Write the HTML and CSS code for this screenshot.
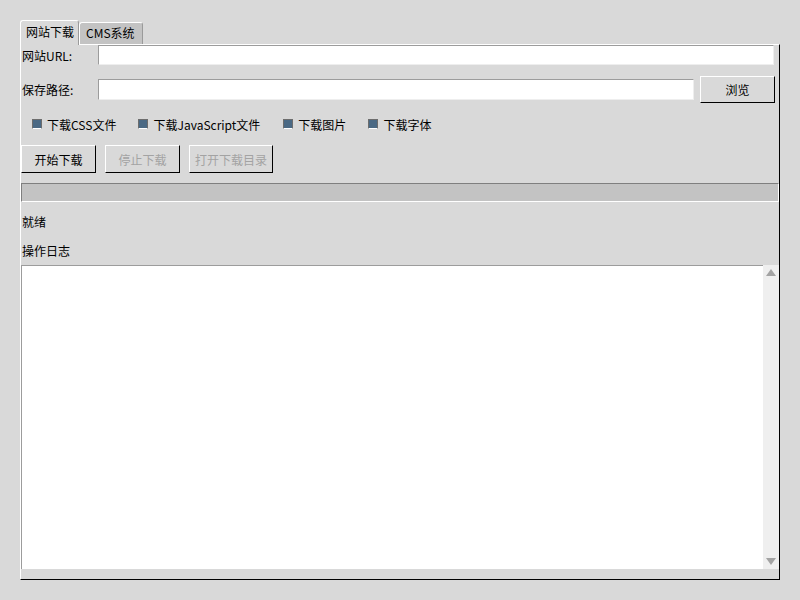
FILE: index.html
```html
<!DOCTYPE html>
<html lang="zh">
<head>
  <meta charset="UTF-8" />
  <title>网站下载器</title>
  <link rel="stylesheet" href="styles.css">
</head>
<body>
  <div class="notebook">
    <div class="tabs">
      <div class="tab selected">网站下载</div>
      <div class="tab">CMS系统</div>
    </div>
    <div class="panel">
      <div class="row row-url">
        <label class="lbl">网站URL:</label>
        <div class="entry"></div>
      </div>
      <div class="row row-path">
        <label class="lbl">保存路径:</label>
        <div class="entry"></div>
        <button class="btn browse">浏览</button>
      </div>
      <div class="checks">
        <span class="check"><i class="box"></i>下载CSS文件</span>
        <span class="check"><i class="box"></i>下载JavaScript文件</span>
        <span class="check"><i class="box"></i>下载图片</span>
        <span class="check"><i class="box"></i>下载字体</span>
      </div>
      <div class="actions">
        <button class="btn">开始下载</button>
        <button class="btn" disabled>停止下载</button>
        <button class="btn wide" disabled>打开下载目录</button>
      </div>
      <div class="progress"></div>
      <div class="status">就绪</div>
      <div class="status log-title">操作日志</div>
      <div class="log">
        <div class="log-text"></div>
        <div class="scrollbar">
          <span class="arrow up"></span>
          <span class="arrow down"></span>
        </div>
      </div>
    </div>
  </div>
</body>
</html>
```

FILE: styles.css
```css
*{
    margin: 0;
    padding: 0;
    box-sizing: border-box;
}
body{
    background-color: #d9d9d9;
    font-family: "Noto Sans CJK SC", "DejaVu Sans", sans-serif;
    font-size: 12px;
    color: #000;
}
.notebook{
    margin: 20px 0 0 20px;
    width: 760px;
}
.tabs{
    display: flex;
    align-items: flex-end;
    height: 24px;
}
.tab{
    height: 22px;
    padding: 0 7px 0 6px;
    line-height: 20px;
    white-space: nowrap;
    background-color: #c3c3c3;
    border: 1px solid #9a9a9a;
    border-top-color: #fff;
    border-left-color: #fff;
    border-bottom: none;
    border-radius: 3px 3px 0 0;
}
.tab.selected{
    height: 25px;
    background-color: #d9d9d9;
    position: relative;
    top: 1px;
    z-index: 1;
    line-height: 22px;
    padding: 0 4px 0 5px;
}
.panel{
    height: 536px;
    border: 1px solid #000;
    border-top-color: #fff;
    border-left-color: #fff;
    display: flex;
    flex-direction: column;
}
.row{
    display: flex;
    align-items: center;
}
.lbl{
    width: 77px;
    padding-left: 1px;
}
.row-url{
    height: 20px;
}
.row-url .entry{
    width: 676px;
    height: 20px;
}
.row-path{
    margin-top: 11px;
    height: 27px;
}
.row-path .entry{
    width: 596px;
    height: 21px;
    margin-right: 6px;
}
.entry{
    background-color: #fff;
    border: 1px solid #eee;
    border-top-color: #9c9c9c;
    border-left-color: #9c9c9c;
}
.btn{
    font: inherit;
    color: #000;
    background-color: #d9d9d9;
    width: 75px;
    height: 28px;
    border: 1px solid #000;
    border-top-color: #fff;
    border-left-color: #fff;
}
.btn:disabled{
    color: #a3a3a3;
}
.browse{
    height: 27px;
}
.btn.wide{
    width: 84px;
}
.checks{
    display: flex;
    align-items: center;
    height: 20px;
    margin-top: 11px;
    padding-left: 11px;
}
.check{
    display: flex;
    align-items: center;
    margin-right: 22px;
}
.check:nth-child(2){
    margin-right: 23px;
}
.box{
    width: 10px;
    height: 10px;
    background-color: #4a6984;
    border: 1px solid #6d6d6d;
    border-bottom-color: #fff;
    margin-right: 5px;
}
.actions{
    display: flex;
    gap: 9px;
    margin-top: 11px;
}
.progress{
    margin-top: 10px;
    height: 19px;
    background-color: #c3c3c3;
    border: 1px solid #fff;
    border-top-color: #7f7f7f;
    border-left-color: #7f7f7f;
}
.status{
    height: 18px;
    line-height: 18px;
    padding-left: 1px;
    margin-top: 11px;
}
.log-title{
    margin-top: 11px;
}
.log{
    display: flex;
    margin-top: 5px;
    height: 304px;
}
.log-text{
    flex: 1;
    background-color: #fff;
    border-top: 1px solid #9c9c9c;
    border-left: 1px solid #9c9c9c;
}
.scrollbar{
    width: 16px;
    background-color: #efefef;
    display: flex;
    flex-direction: column;
    justify-content: space-between;
    align-items: center;
    padding: 4px 0 4px;
}
.arrow{
    width: 0;
    height: 0;
    border-left: 5px solid transparent;
    border-right: 5px solid transparent;
}
.arrow.up{
    border-bottom: 7px solid #a3a3a3;
}
.arrow.down{
    border-top: 7px solid #a3a3a3;
}
```
